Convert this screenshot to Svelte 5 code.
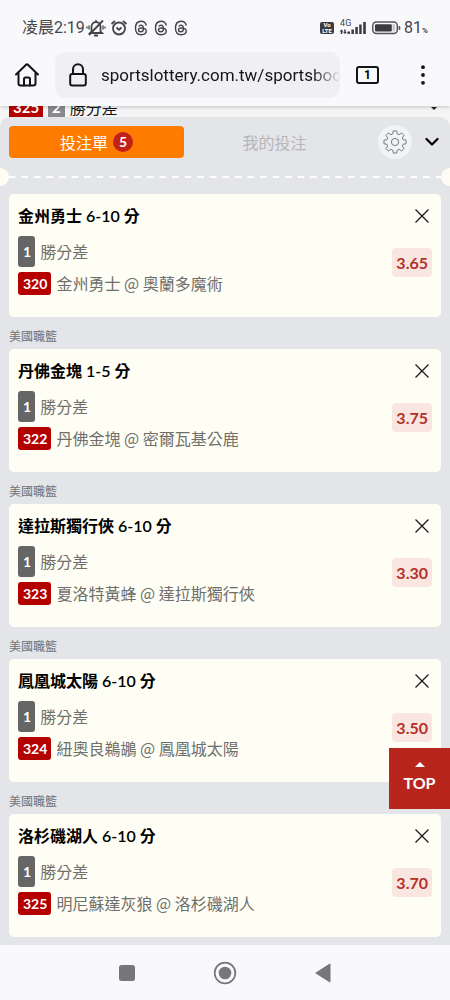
<script lang="ts">
  type Pick = {
    code: string;
    title: string;
    away: string;
    home: string;
    odds: string;
  };

  const LEAGUE = "美國職籃";

  let picks: Pick[] = $state([
    { code: "320", title: "金州勇士 6-10 分", away: "金州勇士", home: "奧蘭多魔術", odds: "3.65" },
    { code: "322", title: "丹佛金塊 1-5 分", away: "丹佛金塊", home: "密爾瓦基公鹿", odds: "3.75" },
    { code: "323", title: "達拉斯獨行俠 6-10 分", away: "夏洛特黃蜂", home: "達拉斯獨行俠", odds: "3.30" },
    { code: "324", title: "鳳凰城太陽 6-10 分", away: "紐奧良鵜鶘", home: "鳳凰城太陽", odds: "3.50" },
    { code: "325", title: "洛杉磯湖人 6-10 分", away: "明尼蘇達灰狼", home: "洛杉磯湖人", odds: "3.70" },
  ]);

  let url = $state("sportslottery.com.tw/sportsbook");

  function removePick(code: string) {
    picks = picks.filter((p) => p.code !== code);
  }

  function scrollTop() {
    window.scrollTo({ top: 0, behavior: "smooth" });
  }

  // Outline of the settings cog, eight teeth around (12, 12)
  function cogPath(): string {
    const pts: string[] = [];
    for (let i = 0; i < 8; i++) {
      const base = (i * Math.PI) / 4 - Math.PI / 2;
      for (const [offset, r] of [[-0.27, 8.4], [-0.16, 11.2], [0.16, 11.2], [0.27, 8.4]]) {
        const a = base + offset;
        pts.push(`${(12 + r * Math.cos(a)).toFixed(2)} ${(12 + r * Math.sin(a)).toFixed(2)}`);
      }
    }
    return `M${pts.join("L")}Z`;
  }
</script>

<div class="screen">
  <header class="chrome">
    <div class="status">
      <span class="clock">凌晨2:19</span>
      <svg class="bell" width="20" height="18" viewBox="0 0 20 18" fill="none" stroke="#454549" stroke-width="1.8">
        <path d="M5.500 12.500V7.500a4.500 4.500 0 0 1 9 0v5l1.500 1.500H4zM8 16.500h4M10 1.300v1.500M17 1.500L3 16" />
        <path d="M3 6.500v4M1 7.500v2M17 6.500v4M19 7.500v2" stroke-width="1.300" />
      </svg>
      <svg width="18" height="18" viewBox="0 0 18 18" fill="none" stroke="#454549" stroke-width="1.800">
        <circle cx="9" cy="9.500" r="6" />
        <path d="M1.500 5L5 2M16.500 5L13 2M6.500 8.500L9 10.700l2.500-2.200" />
      </svg>
      <div class="threads">
        {#each [0, 1, 2] as n (n)}
          <svg width="14" height="16" viewBox="0 0 14 16" fill="none" stroke="#454549" stroke-width="1.400">
            <path d="M12.300 5.500C11.700 2.800 9.800 1.300 7.200 1.300 3.500 1.300 1.500 4 1.500 8s2 6.700 5.700 6.700c3 0 5-1.500 5-3.600 0-2.200-2.200-3.100-4.700-3.100-1.900 0-3 .8-3 2 0 1.100 1 1.800 2.300 1.800 1.800 0 2.700-1.200 2.700-3.200 0-2.100-.9-3.300-2.500-3.300-1 0-1.800.4-2.300 1.200" />
          </svg>
        {/each}
      </div>
      <div class="radio">
        <span class="volte"><span>Vo</span><span>LTE</span></span>
        <span class="signal">
          <span class="net">4G</span>
          <svg width="28" height="14" viewBox="0 0 28 14" fill="#3c3c40">
            <path d="M2.500 8.500l2 2H3.300V13H1.800v-2.500H.5zM6 13l-2-2h1.200V8.500h1.500V11H8z" />
            <rect x="8.500" y="10.500" width="2.400" height="2.500" />
            <rect x="12.400" y="8.500" width="2.500" height="4.500" />
            <rect x="16.300" y="6" width="2.500" height="7" />
            <rect x="20.200" y="3.500" width="2.500" height="9.500" />
            <rect x="24.200" y="1" width="2.600" height="12" />
          </svg>
        </span>
        <svg width="29" height="14" viewBox="0 0 29 14">
          <rect x="0.800" y="1" width="24.500" height="11.600" rx="3.500" fill="none" stroke="#55555a" stroke-width="1.500" />
          <rect x="3" y="3.200" width="16.800" height="7.200" rx="1" fill="#3c3c40" />
          <rect x="20.500" y="3.200" width="2.500" height="7.200" fill="#c9c9cd" />
          <rect x="26.600" y="5" width="1.700" height="4" rx="0.800" fill="#55555a" />
        </svg>
        <span class="level">81<small>%</small></span>
      </div>
    </div>

    <div class="toolbar">
      <button class="icon" aria-label="Home">
        <svg width="26" height="26" viewBox="0 0 26 26" fill="none" stroke="#15141a" stroke-width="2" stroke-linecap="round" stroke-linejoin="round">
          <path d="M2 12.500L11.800 3a1.700 1.700 0 0 1 2.400 0L24 12.500M4.500 10.500V21.500a2 2 0 0 0 2 2h13a2 2 0 0 0 2-2V10.500" />
          <path d="M10 23.500V17a1.500 1.500 0 0 1 1.500-1.500h3A1.500 1.500 0 0 1 16 17v6.500" />
        </svg>
      </button>
      <label class="address">
        <svg width="18" height="24" viewBox="0 0 18 24" fill="none" stroke="#15141a" stroke-width="2">
          <rect x="1.200" y="11" width="15.600" height="11.500" rx="2" />
          <path d="M4 11V6.200a5 5 0 0 1 10 0V11" />
        </svg>
        <input type="text" aria-label="Address" bind:value={url} spellcheck="false" />
      </label>
      <button class="tabs-count" aria-label="Open tabs">1</button>
      <button class="icon menu" aria-label="Menu">
        <svg width="6" height="20" viewBox="0 0 6 20" fill="#15141a">
          <circle cx="3" cy="2.200" r="1.900" />
          <circle cx="3" cy="10" r="1.900" />
          <circle cx="3" cy="17.800" r="1.900" />
        </svg>
      </button>
    </div>
  </header>

  <main>
    <div class="behind">
      <span class="behind-code">325</span>
      <span class="behind-kind">2</span>
      <span class="behind-name">勝分差</span>
      <svg width="10" height="10" viewBox="0 0 10 10"><path d="M2 0h6L5 3z" fill="#222" /></svg>
    </div>

    <section class="sheet">
      <div class="sheet-head">
        <button class="tab active">投注單 <span class="count">{picks.length}</span></button>
        <button class="tab">我的投注</button>
        <button class="gear" aria-label="設定">
          <svg width="24" height="24" viewBox="0 0 24 24" fill="none" stroke="#77797c" stroke-width="1" stroke-linejoin="round">
            <path d={cogPath()} />
            <circle cx="12" cy="12" r="3.600" />
          </svg>
        </button>
        <button class="collapse" aria-label="收合">
          <svg width="14" height="10" viewBox="0 0 14 10" fill="none" stroke="#000" stroke-width="2.200" stroke-linecap="round" stroke-linejoin="round">
            <path d="M1.500 2L7 7.500 12.500 2" />
          </svg>
        </button>
      </div>

      <div class="perforation">
        <svg width="100%" height="2"><line x1="0" y1="1" x2="100%" y2="1" stroke="#fff" stroke-width="2" stroke-dasharray="6.500 6.050" /></svg>
      </div>

      {#each picks as pick, i (pick.code)}
        {#if i > 0}
          <h2>{LEAGUE}</h2>
        {/if}
        <article>
          <div class="card-head">
            <h3>{pick.title}</h3>
            <button class="close" aria-label="移除" onclick={() => removePick(pick.code)}>
              <svg width="14" height="14" viewBox="0 0 14 14" stroke="#1a1a1a" stroke-width="1.300">
                <path d="M0.500 0.500L13.500 13.500M13.500 0.500L0.500 13.500" />
              </svg>
            </button>
          </div>
          <div class="card-body">
            <div class="lines">
              <p><span class="kind">1</span>勝分差</p>
              <p><span class="code">{pick.code}</span>{pick.away} @ {pick.home}</p>
            </div>
            <span class="odds">{pick.odds}</span>
          </div>
        </article>
      {/each}
    </section>

    <button class="top" onclick={scrollTop}>
      <svg width="10" height="5" viewBox="0 0 10 5" fill="#fff"><path d="M5 0l5 5H0z" /></svg>
      TOP
    </button>
  </main>

  <nav>
    <button aria-label="Recent apps">
      <svg width="16" height="16" viewBox="0 0 16 16"><rect width="16" height="16" rx="2.500" fill="#77777a" /></svg>
    </button>
    <button aria-label="Home screen">
      <svg width="24" height="24" viewBox="0 0 24 24">
        <circle cx="12" cy="12" r="10.300" fill="none" stroke="#77777a" stroke-width="1.700" />
        <circle cx="12" cy="12" r="6.300" fill="#77777a" />
      </svg>
    </button>
    <button aria-label="Back">
      <svg width="16" height="20" viewBox="0 0 16 20"><path d="M15.500 1.200v17.600a.6.6 0 0 1-1 .4L.8 10.600a.7.7 0 0 1 0-1.200L14.500.8a.6.6 0 0 1 1 .4z" fill="#77777a" /></svg>
    </button>
  </nav>
</div>

<style>
  :global(body) {
    margin: 0;
    background: #f9f9fc;
  }

  .screen {
    display: flex;
    flex-direction: column;
    min-height: 100vh;
    font-family: Lato, "Noto Sans CJK TC", sans-serif;
    font-size: 16px;
    color: #000;
  }

  button {
    display: flex;
    align-items: center;
    justify-content: center;
    margin: 0;
    padding: 0;
    border: 0;
    background: none;
    font: inherit;
    color: inherit;
    cursor: pointer;
  }

  svg {
    display: block;
    flex-shrink: 0;
  }

  h2,
  h3,
  p {
    margin: 0;
  }

  /* browser and status bar */

  .chrome {
    position: sticky;
    top: 0;
    z-index: 2;
    background: #f9f9fc;
    font-family: Roboto, "Noto Sans CJK TC", sans-serif;
    box-shadow: 0 1px 4px rgba(0, 0, 0, 0.2);
  }

  .status {
    display: flex;
    align-items: center;
    gap: 4px;
    padding: 16px 22px 12px;
    color: #454549;
    line-height: 24px;
  }

  .bell {
    margin-left: -3px;
  }

  .threads {
    display: flex;
    gap: 6px;
    margin-left: 2px;
  }

  .radio {
    display: flex;
    align-items: center;
    gap: 5px;
    margin-left: auto;
  }

  .volte {
    display: flex;
    flex-direction: column;
    align-items: center;
    width: 14px;
    border-radius: 2px;
    background: #3c3c40;
    color: #fff;
    font-size: 6px;
    font-weight: 700;
    line-height: 6px;
  }

  .signal {
    position: relative;
  }

  .net {
    position: absolute;
    top: -2px;
    left: 1px;
    font-size: 9px;
    line-height: 8px;
  }

  .level {
    margin-left: -2px;
  }

  .level small {
    font-size: 8px;
    font-weight: 700;
    line-height: 8px;
  }

  .toolbar {
    display: flex;
    align-items: center;
    padding: 0 14px 8px;
  }

  .icon {
    width: 26px;
    height: 40px;
  }

  .address {
    display: flex;
    flex: 1;
    align-items: center;
    gap: 14px;
    min-width: 0;
    height: 46px;
    margin: 0 16px 0 15px;
    padding-left: 14px;
    border-radius: 10px;
    background: #f0f0f4;
  }

  .address input {
    flex: 1;
    min-width: 0;
    padding: 0;
    border: 0;
    outline: none;
    background: none;
    color: #15141a;
    font: inherit;
    font-size: 17px;
    mask-image: linear-gradient(to left, transparent, #000 28px);
  }

  .tabs-count {
    width: 23px;
    height: 18px;
    border: 2px solid #15141a;
    border-radius: 3px;
    box-sizing: border-box;
    font-size: 12px;
    font-weight: 700;
  }

  .menu {
    margin-left: 31px;
  }

  /* list row that shows above the bet slip */

  main {
    display: flex;
    flex: 1;
    flex-direction: column;
    background: #f5f5f6;
  }

  .behind {
    display: flex;
    align-items: flex-end;
    height: 11px;
    padding: 0 11px 0 9px;
    overflow: hidden;
    color: #fff;
    line-height: 20px;
  }

  .behind-code,
  .behind-kind {
    padding: 0 4px;
    background: #b50000;
    font-size: 15px;
    font-weight: 700;
  }

  .behind-kind {
    margin: 0 5px;
    background: #8a8a8c;
  }

  .behind-name {
    color: #111;
    line-height: 18px;
  }

  .behind svg {
    margin-left: auto;
  }

  .sheet {
    flex: 1;
    padding: 9px 9px 8px;
    border-radius: 10px 10px 0 0;
    background: #e4e5e8;
    overflow: hidden;
  }

  .sheet-head {
    display: flex;
    align-items: center;
    height: 32px;
    padding-right: 2px;
  }

  .tab {
    flex: 1;
    gap: 5px;
    height: 32px;
    border-radius: 4px;
    color: #b5b6b9;
  }

  .tab + .tab {
    margin-left: 3px;
  }

  .tab.active {
    background: #ff7b00;
    color: #fff;
  }

  .count {
    width: 20px;
    border-radius: 50%;
    background: #c2201a;
    font-size: 14px;
    font-weight: 700;
    line-height: 20px;
  }

  .gear {
    width: 34px;
    height: 34px;
    margin: 0 13px 0 16px;
    border-radius: 50%;
    background: #f2f3f5;
  }

  .collapse {
    height: 32px;
  }

  .perforation {
    display: flex;
    align-items: center;
    justify-content: space-between;
    height: 18px;
    margin: 10px -18px 8px;
  }

  .perforation::before,
  .perforation::after {
    content: "";
    flex: 0 0 18px;
    height: 18px;
    border-radius: 50%;
    background: #fffdf3;
  }

  .perforation svg {
    flex: 1;
    min-width: 0;
  }

  h2 {
    padding-top: 8px;
    color: #707174;
    font-size: 12px;
    font-weight: 400;
    line-height: 24px;
  }

  article {
    padding: 10px 9px 22px;
    border-radius: 5px;
    background: #fffef5;
  }

  .card-head,
  .card-body {
    display: flex;
    align-items: center;
    justify-content: space-between;
  }

  .card-head {
    margin-bottom: 8px;
  }

  h3 {
    font-size: 16px;
    font-weight: 600;
    line-height: 24px;
  }

  .close {
    width: 20px;
    height: 20px;
  }

  .lines {
    display: flex;
    flex-direction: column;
    gap: 5px;
    color: #6f6f6c;
    font-family: "Noto Sans CJK TC", sans-serif;
    line-height: 23px;
  }

  .lines p {
    display: flex;
    align-items: center;
    gap: 5px;
  }

  .kind,
  .code {
    padding: 0 4px 0 5px;
    border-radius: 3px;
    background: #b50000;
    color: #fff;
    font-family: Lato, sans-serif;
    font-size: 14px;
    font-weight: 700;
  }

  .kind {
    padding: 4px 4px 4px 5px;
    background: #666;
  }

  .odds {
    padding: 0 4px;
    border-radius: 4px;
    margin-bottom: 6px;
    background: #f9e6e0;
    color: #b5302a;
    font-weight: 700;
    line-height: 29px;
  }

  .top {
    position: fixed;
    right: 0;
    bottom: 191px;
    flex-direction: column;
    gap: 4px;
    width: 61px;
    height: 61px;
    background: #b7251c;
    color: #fff;
    font-weight: 700;
    line-height: 24px;
  }

  nav {
    display: flex;
    justify-content: center;
    background: #f9f9fc;
  }

  nav button {
    width: 98px;
    height: 55px;
  }
</style>
